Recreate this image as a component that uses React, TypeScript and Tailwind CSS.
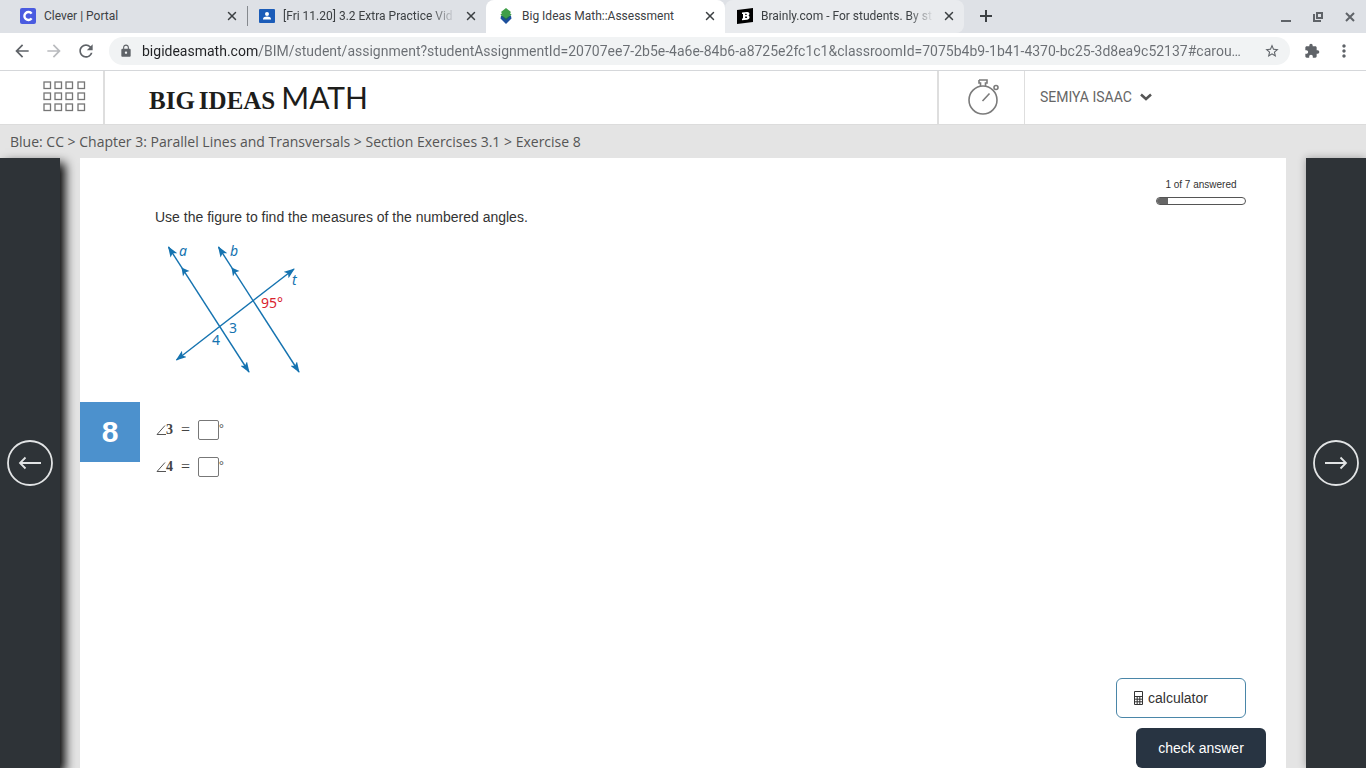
import type { ReactNode } from 'react';
import { LuX } from 'react-icons/lu';
import {
    MdArrowBack,
    MdArrowForward,
    MdExtension,
    MdLock,
    MdMoreVert,
    MdRefresh,
    MdStarBorder,
} from 'react-icons/md';

type Tab = {
    id: number;
    title: string;
    icon: ReactNode;
    className: string;
    titleClassName: string;
};

type Angle = {
    id: string;
    label: string;
};

const tabs: Tab[] = [
    {
        id: 1,
        title: 'Clever | Portal',
        icon: <CleverIcon />,
        className: '',
        titleClassName: '',
    },
    {
        id: 2,
        title: '[Fri 11.20] 3.2 Extra Practice Vid',
        icon: <ClassroomIcon />,
        className:
            'before:absolute before:left-0 before:h-5 before:w-px before:bg-[#85898e]',
        titleClassName: 'mask-r-from-85%',
    },
    {
        id: 3,
        title: 'Big Ideas Math::Assessment',
        icon: <BigIdeasIcon />,
        className: 'rounded-t-lg bg-white',
        titleClassName: '',
    },
    {
        id: 4,
        title: 'Brainly.com - For students. By st',
        icon: <BrainlyIcon />,
        className: 'rounded-t-lg rounded-br-lg bg-[#e9ebee]',
        titleClassName: 'mask-r-from-85%',
    },
];

const angles: Angle[] = [
    { id: 'angle-3', label: '3' },
    { id: 'angle-4', label: '4' },
];

const breadcrumbs = [
    'Blue: CC',
    'Chapter 3: Parallel Lines and Transversals',
    'Section Exercises 3.1',
    'Exercise 8',
];

function CleverIcon() {
    return (
        <svg viewBox="0 0 16 16" className="size-4 shrink-0">
            <rect width="16" height="16" rx="2" fill="#4a5be0" />
            <path
                d="M11.6 5.6A4 4 0 1 0 11.6 10.4"
                fill="none"
                stroke="#fff"
                strokeWidth="2.4"
            />
        </svg>
    );
}

function ClassroomIcon() {
    return (
        <svg viewBox="0 0 16 16" className="size-4 shrink-0">
            <rect y="1" width="16" height="14" rx="1" fill="#1b5cb8" />
            <circle cx="8" cy="6" r="2" fill="#fff" />
            <path d="M4 11.5V11c0-1.6 2.4-2.4 4-2.4s4 .8 4 2.4v.5z" fill="#fff" />
        </svg>
    );
}

function BigIdeasIcon() {
    return (
        <svg viewBox="0 0 16 16" className="size-4 shrink-0">
            <path d="M3 8l-.5 2.500L8 16l5.500-5.500L13 8z" fill="#1c4f9c" />
            <path d="M2.500 6L8 10.500 13.500 6 12 8.500 8 12 4 8.500z" fill="#1f6a52" />
            <path d="M8 0l5 4-1 1.200 1.500 1.300L8 10.500 2.500 6.500 4 5.200 3 4z" fill="#3f9f48" />
        </svg>
    );
}

function BrainlyIcon() {
    return (
        <svg viewBox="0 0 16 16" className="size-4 shrink-0">
            <path d="M0 2l16-2v14L0 16z" fill="#000" />
            <path
                d="M5 4.4l5-.5c3-.2 3 3 1.300 3.700 2 .6 1.700 4-1.300 4.200l-5 .4v-1.700h1V6H5zM8.200 5.700v1.300h1c.9-.1.9-1.300 0-1.300zM8.200 8.600v1.500h1.200c1-.1.900-1.500 0-1.500z"
                fill="#fff"
                fillRule="evenodd"
            />
        </svg>
    );
}

function TabBar() {
    return (
        <div className="flex h-[33px] items-stretch bg-[#dee1e6] pl-2 font-[Roboto,sans-serif] text-xs text-[#3c4043]">
            {tabs.map((tab) => (
                <div
                    key={tab.id}
                    className={`relative flex w-[239px] items-center gap-2 pr-2 pb-px pl-3 ${tab.className}`}
                >
                    {tab.icon}
                    <span
                        className={`min-w-0 flex-1 overflow-hidden whitespace-nowrap ${tab.titleClassName}`}
                    >
                        {tab.title}
                    </span>
                    <button aria-label="Close tab">
                        <LuX className="size-[14px]" strokeWidth={2.5} />
                    </button>
                </div>
            ))}
            <button aria-label="New tab" className="ml-4 pb-px">
                <svg viewBox="0 0 12 12" className="size-3" stroke="#3c4043" strokeWidth="2">
                    <path d="M6 0v12M0 6h12" />
                </svg>
            </button>
            <div className="ml-auto flex items-center gap-[22px] pr-[11px] text-[#5f6368]">
                <button aria-label="Minimize">
                    <svg viewBox="0 0 10 10" className="size-[10px]" fill="currentColor">
                        <path d="M0 8h10v2H0z" />
                    </svg>
                </button>
                <button aria-label="Restore">
                    <svg
                        viewBox="0 0 10 10"
                        className="size-[10px]"
                        fill="none"
                        stroke="currentColor"
                        strokeWidth="2"
                    >
                        <path d="M4 1h5v5H4zM1 2v7h7" />
                    </svg>
                </button>
                <button aria-label="Close window">
                    <svg
                        viewBox="0 0 10 10"
                        className="size-[10px]"
                        stroke="currentColor"
                        strokeWidth="2"
                    >
                        <path d="M1 1l8 8M9 1L1 9" />
                    </svg>
                </button>
            </div>
        </div>
    );
}

function Toolbar() {
    return (
        <div className="flex h-[38px] items-center border-b border-[#d5d7da] bg-white pr-3 pb-0.5 pl-3 text-[#5f6368]">
            <div className="flex w-[97px] items-center gap-3">
                <button aria-label="Back">
                    <MdArrowBack className="size-5" />
                </button>
                <button aria-label="Forward" className="text-[#b9bbbe]">
                    <MdArrowForward className="size-5" />
                </button>
                <button aria-label="Reload">
                    <MdRefresh className="size-5" />
                </button>
            </div>
            <div className="flex h-7 flex-1 items-center rounded-full bg-[#f1f3f4] pr-[10px] pl-[10px]">
                <MdLock className="size-[14px]" />
                <input
                    aria-label="Address"
                    className="ml-[9px] min-w-0 flex-1 bg-linear-to-r from-[#202124] from-[117px] to-[#6a6e73] to-[117px] bg-clip-text font-[Roboto,sans-serif] text-sm text-ellipsis text-transparent outline-none"
                    defaultValue="bigideasmath.com/BIM/student/assignment?studentAssignmentId=20707ee7-2b5e-4a6e-84b6-a8725e2fc1c1&classroomId=7075b4b9-1b41-4370-bc25-3d8ea9c52137#carou…"
                />
                <button aria-label="Bookmark this page">
                    <MdStarBorder className="size-4" />
                </button>
            </div>
            <div className="flex items-center gap-[14px] pl-[14px]">
                <button aria-label="Extensions">
                    <MdExtension className="size-4" />
                </button>
                <button aria-label="Menu">
                    <MdMoreVert className="size-5" />
                </button>
            </div>
        </div>
    );
}

function SiteHeader() {
    return (
        <header className="flex h-[54px] items-stretch border-b border-[#dcdcdc] bg-white">
            <button aria-label="Apps" className="flex w-[103px] items-center pb-0.5 pl-[43px]">
                <svg
                    viewBox="0 0 43 31"
                    className="h-[31px] w-[43px]"
                    fill="none"
                    stroke="#767676"
                    strokeWidth="1.3"
                >
                    {[0, 11, 22, 34].map((x) =>
                        [0, 11, 22].map((y) => (
                            <rect key={`${x}-${y}`} x={x + 1} y={y + 1} width="6.5" height="6.5" />
                        )),
                    )}
                </svg>
            </button>
            <a
                href="#home"
                className="flex flex-1 items-baseline gap-1 border-l-2 border-[#dedede] pt-1 pl-11 text-[#1d1d1b]"
            >
                <span className="font-['Liberation_Serif',serif] text-[25px] font-bold">BIG</span>
                <span className="font-['Liberation_Serif',serif] text-[25px] font-bold">IDEAS</span>
                <span className="pl-0.5 font-[Lato,sans-serif] text-[30px]">MATH</span>
            </a>
            <button
                aria-label="Timer"
                className="flex w-[87px] items-center justify-center border-l-2 border-[#dedede] pb-0.5 pl-1"
            >
                <svg
                    viewBox="0 0 31 36"
                    className="h-9 w-[31px]"
                    fill="none"
                    stroke="#7b7b7b"
                    strokeWidth="1.6"
                >
                    <circle cx="15" cy="21" r="14" />
                    <path d="M11 1h8v3h-1.500v3M11 1v3h1.500v3M14.500 22l7-7.500" />
                    <circle cx="28" cy="8.500" r="2" />
                </svg>
            </button>
            <button className="flex w-[342px] items-center gap-2 border-l border-[#dedede] pb-0.5 pl-[15px] font-[Roboto,sans-serif] text-sm text-[#666]">
                SEMIYA ISAAC
                <svg
                    viewBox="0 0 12 8"
                    className="h-2 w-3"
                    fill="none"
                    stroke="#555"
                    strokeWidth="2.5"
                >
                    <path d="M1 1.500l5 4.500 5-4.500" />
                </svg>
            </button>
        </header>
    );
}

function Figure() {
    return (
        <svg
            viewBox="155 240 150 138"
            className="h-[138px] w-[150px]"
            role="img"
            aria-label="Parallel lines a and b cut by transversal t"
        >
            <defs>
                <marker
                    id="arrow"
                    viewBox="0 0 11 8"
                    refX="10"
                    refY="4"
                    markerWidth="11"
                    markerHeight="8"
                    markerUnits="userSpaceOnUse"
                    orient="auto-start-reverse"
                >
                    <path d="M0 0l11 4-11 4 2.500-4z" fill="#1573b0" />
                </marker>
            </defs>
            <g stroke="#1573b0" strokeWidth="1.4" fill="none">
                <path d="M168.500 247L249 372" markerStart="url(#arrow)" markerEnd="url(#arrow)" />
                <path d="M218.500 247L299 372" markerStart="url(#arrow)" markerEnd="url(#arrow)" />
                <path d="M176.500 360L294 269" markerStart="url(#arrow)" markerEnd="url(#arrow)" />
            </g>
            <g fill="#1573b0">
                <path d="M181.500 267.500l8 3.500-4.500 1.500-2 4z" />
                <path d="M231.500 267.500l8 3.500-4.500 1.500-2 4z" />
            </g>
            <g fill="#1573b0" fontFamily="Noto Sans, sans-serif" fontSize="14">
                <text x="179" y="256" fontStyle="italic">a</text>
                <text x="230" y="256" fontStyle="italic">b</text>
                <text x="292" y="285" fontStyle="italic">t</text>
                <text x="229" y="333">3</text>
                <text x="212" y="345">4</text>
                <text x="261" y="308" fill="#d9232e">95°</text>
            </g>
        </svg>
    );
}

function AngleField({ angle }: { angle: Angle }) {
    return (
        <div className="flex h-5 items-center font-['Liberation_Serif',serif] text-sm text-[#444]">
            <label htmlFor={angle.id} className="flex items-center">
                <svg viewBox="0 0 11 10" className="h-[10px] w-[11px]" fill="none" stroke="#555">
                    <path d="M10 .5L2 9.500h9" />
                </svg>
                <span className="font-bold">{angle.label}</span>
                <span className="px-2 text-base">=</span>
            </label>
            <input
                id={angle.id}
                className="h-5 w-[21px] rounded-xs border border-[#777] bg-white text-center"
            />
            <span className="self-start text-xs leading-4">°</span>
        </div>
    );
}

function Question() {
    return (
        <section className="flex min-w-0 flex-1 flex-col bg-white font-['Liberation_Sans',sans-serif] text-[#333]">
            <div className="flex items-start justify-between pt-5 pr-10 pl-[75px]">
                <div className="pt-[29px]">
                    <p className="text-sm leading-5">
                        Use the figure to find the measures of the numbered angles.
                    </p>
                    <div className="pt-[13px]">
                        <Figure />
                    </div>
                </div>
                <div className="flex w-[90px] flex-col items-center gap-[5px]">
                    <span className="text-[10px] leading-[14px]">1 of 7 answered</span>
                    <div className="h-2 w-full overflow-hidden rounded-full border border-[#555]">
                        <div className="h-full w-[13%] bg-[#666]" />
                    </div>
                </div>
            </div>
            <div className="mt-6 flex items-start">
                <div className="flex size-[60px] items-center justify-center bg-[#4c91cd] text-3xl font-bold text-white">
                    8
                </div>
                <div className="flex flex-col gap-[17px] pt-[18px] pl-[15px]">
                    {angles.map((angle) => (
                        <AngleField key={angle.id} angle={angle} />
                    ))}
                </div>
            </div>
            <div className="mt-auto flex flex-col items-end gap-[10px] pr-5 text-sm">
                <button className="mr-5 flex h-10 w-[130px] items-center gap-[5px] rounded-md border border-[#4a86a8] bg-white pl-[17px]">
                    <svg
                        viewBox="0 0 9 14"
                        className="h-[14px] w-[9px]"
                        fill="none"
                        stroke="#333"
                    >
                        <path d="M.5.5h8v13h-8zM.5 5.500h8M.5 8.200h8M.5 10.800h8M3.200 5.500v8M5.800 5.500v8" />
                    </svg>
                    calculator
                </button>
                <button className="h-10 w-[130px] rounded-md bg-[#283442] text-white">
                    check answer
                </button>
            </div>
        </section>
    );
}

function NavButton({ direction }: { direction: 'left' | 'right' }) {
    return (
        <button aria-label={direction === 'left' ? 'Previous exercise' : 'Next exercise'}>
            <svg
                viewBox="0 0 46 46"
                className="size-[46px]"
                fill="none"
                stroke="#e2e4e5"
                strokeWidth="1.8"
            >
                <circle cx="23" cy="23" r="22" />
                {direction === 'left' ? (
                    <path d="M34 23H13M18.500 17.500L13 23l5.500 5.500" />
                ) : (
                    <path d="M12 23h21M27.500 17.500L33 23l-5.500 5.500" />
                )}
            </svg>
        </button>
    );
}

export default function App() {
    return (
        <div className="flex min-h-screen flex-col overflow-hidden bg-[#e4e4e4]">
            <TabBar />
            <Toolbar />
            <SiteHeader />
            <nav className="flex h-[33px] items-center pl-[10px] font-['Open_Sans',sans-serif] text-sm text-[#555]">
                <p>
                    {breadcrumbs.map((crumb, index) => (
                        <span key={crumb}>
                            {index > 0 && ' > '}
                            <a href="#crumb">{crumb}</a>
                        </span>
                    ))}
                </p>
            </nav>
            <main className="flex flex-1 items-stretch gap-5">
                <div className="flex w-[60px] items-center justify-center bg-[#2e3337] shadow-[5px_5px_10px_#000]">
                    <NavButton direction="left" />
                </div>
                <Question />
                <div className="flex w-[60px] items-center justify-center bg-[#2e3337] shadow-[0_0_8px_rgba(0,0,0,0.3)]">
                    <NavButton direction="right" />
                </div>
            </main>
        </div>
    );
}
